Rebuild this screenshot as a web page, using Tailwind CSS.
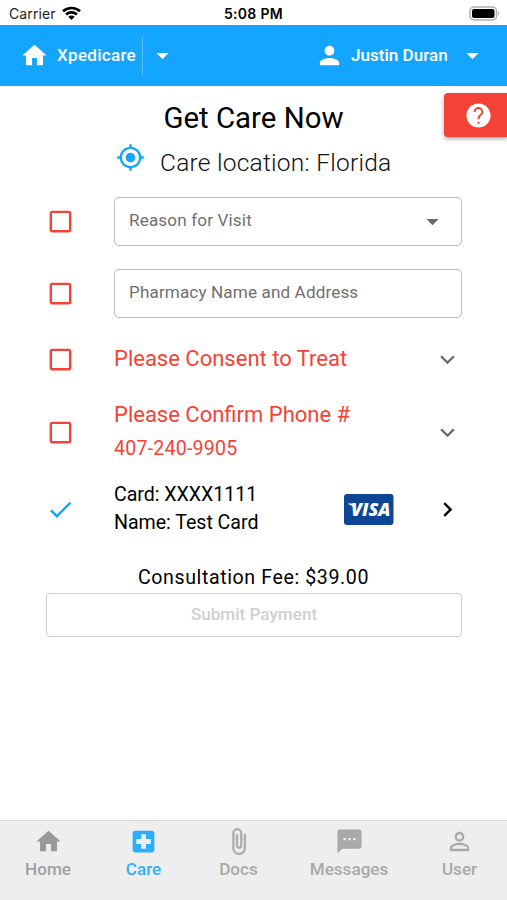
<!DOCTYPE html>
<html lang="en">
<head>
<meta charset="utf-8">
<title>Xpedicare</title>
<script src="https://cdn.jsdelivr.net/npm/@tailwindcss/browser@4"></script>
</head>
<body class="bg-white">
<svg class="hidden">
  <symbol id="home" viewBox="0 0 24 24"><path d="M10 20v-6h4v6h5v-8h3L12 3 2 12h3v8z"/></symbol>
  <symbol id="down" viewBox="0 0 24 24"><path d="M7 10l5 5 5-5z"/></symbol>
  <symbol id="person" viewBox="0 0 24 24"><path d="M12 12c2.21 0 4-1.79 4-4s-1.79-4-4-4-4 1.790-4 4 1.790 4 4 4zm0 2c-2.670 0-8 1.340-8 4v2h16v-2c0-2.660-5.330-4-8-4z"/></symbol>
  <symbol id="box" viewBox="0 0 24 24"><path d="M19 5v14H5V5h14m0-2H5c-1.100 0-2 .9-2 2v14c0 1.100.9 2 2 2h14c1.100 0 2-.9 2-2V5c0-1.100-.9-2-2-2z"/></symbol>
  <symbol id="chevron" viewBox="0 0 24 24"><path d="M7.410 8.590 12 13.170l4.590-4.580L18 10l-6 6-6-6z"/></symbol>
</svg>
<div class="w-[507px] h-[900px] flex flex-col overflow-hidden bg-white font-['Roboto',sans-serif] text-black">
  <div class="h-[25px] shrink-0 grid grid-cols-3 items-center px-[9px] pt-[3px] font-['Inter',sans-serif] text-[14px] leading-none">
    <div class="flex items-center gap-[6px] text-[#222]">
      <span class="tracking-[0.1px]">Carrier</span>
      <svg class="w-[19px] h-[14px] -mt-[2px]" viewBox="0 0 19 14" fill="none" stroke="#000" stroke-width="2.7"><path d="M1 5.200C5.800.9 13.200.9 18 5.200"/><path d="M4.100 8.400c3.100-2.700 7.700-2.700 10.800 0"/><path d="M9.500 14 6.300 10.800c1.800-1.700 4.600-1.700 6.400 0z" fill="#000" stroke="none"/></svg>
    </div>
    <span class="text-center font-semibold tracking-[0.300px] whitespace-nowrap">5:08 PM</span>
    <svg class="w-[31px] h-[15px] justify-self-end relative -top-[1px] left-[2px]" viewBox="0 0 31 15"><rect x="1" y="1" width="26.500" height="13" rx="4" fill="#fff" stroke="#b0b0b0" stroke-width="1.500"/><rect x="3" y="3" width="22.500" height="9" rx="2" fill="#000"/><path d="M29 5v5q2-2.500 0-5z" fill="#aaa"/></svg>
  </div>
  <header class="h-[61px] shrink-0 bg-[#13a5ff] text-white flex items-center text-[17.100px] font-medium">
    <svg class="w-[29px] h-[29px] ml-[20px] fill-white"><use href="#home"/></svg>
    <span class="ml-[8px] w-[85px] tracking-[0.250px] whitespace-nowrap">Xpedicare</span>
    <span class="w-px h-[39px] bg-[#5cc0ff]"></span>
    <svg class="w-[29px] h-[29px] ml-[5px] fill-white"><use href="#down"/></svg>
    <svg class="w-[29px] h-[29px] ml-auto fill-white"><use href="#person"/></svg>
    <span class="ml-[7px] w-[107px] tracking-[0px] whitespace-nowrap">Justin Duran</span>
    <svg class="w-[29px] h-[29px] mr-[20px] fill-white"><use href="#down"/></svg>
  </header>
  <main class="flex-1 relative flex flex-col">
    <button class="absolute right-0 top-[7px] w-[63px] h-[44px] rounded-l-[4px] bg-[#f44336] shadow-[0_2px_4px_rgba(0,0,0,0.35)] flex items-center pl-[20px]">
      <svg class="w-[29px] h-[29px]" viewBox="0 0 24 24" fill="#fff"><path d="M12 2C6.480 2 2 6.480 2 12s4.480 10 10 10 10-4.480 10-10S17.520 2 12 2zm.8 16.800h-1.600v-1.700h1.600v1.700zm2.270-7.550-.9.920C13.350 13 12.800 13.600 12.800 15.200h-1.600v-.5c0-1.100.45-2.100 1.170-2.830l1.240-1.260c.47-.46.75-.96.75-1.610 0-1.300-1.060-2.360-2.360-2.360S9.640 7.700 9.640 9H8c0-2.210 1.790-4 4-4s4 1.790 4 4c0 .88-.36 1.680-.93 2.250z"/></svg>
    </button>
    <h1 class="mt-[14px] h-[36px] leading-[36px] text-center text-[29.400px] tracking-[0px]">Get Care Now</h1>
    <div class="h-[50px] flex pl-[116px]">
      <svg class="w-[29px] h-[29px] mt-[7px]" viewBox="0 0 24 24" fill="#13a5ff"><path d="M12 8c-2.210 0-4 1.790-4 4s1.790 4 4 4 4-1.790 4-4-1.790-4-4-4zm8.940 3A8.994 8.994 0 0 0 13 3.060V1h-2v2.060A8.994 8.994 0 0 0 3.060 11H1v2h2.060A8.994 8.994 0 0 0 11 20.940V23h2v-2.060A8.994 8.994 0 0 0 20.940 13H23v-2h-2.060zM12 19c-3.870 0-7-3.130-7-7s3.130-7 7-7 7 3.130 7 7-3.130 7-7 7z"/></svg>
      <p class="ml-[15px] mt-[10px] h-[34px] leading-[34px] text-[24.500px] font-light tracking-[0.250px] whitespace-nowrap text-[#111]">Care location: Florida</p>
    </div>
    <section class="mt-[11px] pl-[46px] pr-[45px]">
      <div class="h-[49px] flex items-center">
        <svg class="w-[29px] h-[29px] mr-[39px] fill-[#f44336]"><use href="#box"/></svg>
        <div class="flex-1 h-[49px] border border-[#bdbdbd] rounded-[5px] flex items-center justify-between pl-[14px] pr-[14px]">
          <span class="text-[17.100px] tracking-[0.150px] text-[#707070] pb-[2px]">Reason for Visit</span>
          <svg class="w-[29px] h-[29px] fill-[#6b6b6b]"><use href="#down"/></svg>
        </div>
      </div>
      <div class="mt-[23px] h-[49px] flex items-center">
        <svg class="w-[29px] h-[29px] mr-[39px] fill-[#f44336]"><use href="#box"/></svg>
        <div class="flex-1 h-[49px] border border-[#bdbdbd] rounded-[5px] flex items-center px-[14px]">
          <span class="text-[17.100px] tracking-[0.130px] text-[#707070] pb-[2px]">Pharmacy Name and Address</span>
        </div>
      </div>
      <div class="mt-[23px] h-[37px] flex items-center">
        <svg class="w-[29px] h-[29px] mr-[39px] fill-[#f44336]"><use href="#box"/></svg>
        <span class="flex-1 text-[22px] tracking-[0px] pb-[2px] text-[#f44336]">Please Consent to Treat</span>
        <svg class="w-[29px] h-[29px] fill-[#6b6b6b]"><use href="#chevron"/></svg>
      </div>
      <div class="mt-[18px] h-[73px] flex items-center">
        <svg class="w-[29px] h-[29px] mr-[39px] fill-[#f44336]"><use href="#box"/></svg>
        <div class="flex-1 pb-[2px] text-[#f44336]">
          <p class="h-[34px] leading-[34px] text-[22px] tracking-[0px]">Please Confirm Phone #</p>
          <p class="h-[34px] leading-[34px] text-[19.600px] tracking-[0.200px]">407-240-9905</p>
        </div>
        <svg class="w-[29px] h-[29px] fill-[#6b6b6b]"><use href="#chevron"/></svg>
      </div>
      <div class="mt-[10px] h-[61px] flex items-center">
        <svg class="w-[29px] h-[29px] mr-[39px]" viewBox="0 0 24 24" fill="#13a5ff"><path d="M9 16.170 4.830 12l-1.420 1.410L9 19 21 7l-1.410-1.410z"/></svg>
        <div class="flex-1 pb-[2px] text-[19.600px] leading-[28px] tracking-[-0.030px]">
          <p>Card: XXXX1111</p>
          <p>Name: Test Card</p>
        </div>
        <svg class="w-[50px] h-[31px] mr-[39px]" viewBox="0 0 50 31"><rect width="49.500" height="31" rx="3" fill="#0e4595"/><path d="M4 9.500h5.500l1.200 5.200Q8.200 11.200 4 9.900z" fill="#fff"/><text x="7" y="22" textLength="39.500" lengthAdjust="spacingAndGlyphs" font-family="Open Sans" font-size="17.500" font-weight="800" font-style="italic" fill="#fff">VISA</text></svg>
        <svg class="w-[29px] h-[29px] fill-black -rotate-90"><use href="#chevron"/></svg>
      </div>
    </section>
    <p class="mt-[23px] h-[30px] leading-[30px] text-center text-[19.600px] tracking-[0.600px]">Consultation Fee: $39.00</p>
    <button class="mt-0 ml-[46px] mr-[45px] h-[44px] border border-[#cfcfcf] rounded-[4px] text-[17.100px] font-medium tracking-[0px] text-[#cfcfcf]">Submit Payment</button>
  </main>
  <nav class="h-[80px] shrink-0 border-t border-[#d8d8d8] bg-[#eee] text-[#a9a9a9] fill-[#a9a9a9] text-[17.100px] font-medium tracking-[0px] flex text-center">
    <a class="w-[96px] flex flex-col items-center pt-[6px]"><svg class="w-[29px] h-[29px] fill-[#999]"><use href="#home"/></svg><span class="leading-[26px] text-[#9f9f9f]">Home</span></a>
    <a class="w-[95px] flex flex-col items-center pt-[6px] text-[#33aefb]"><svg class="w-[29px] h-[29px] fill-[#2baeff]" viewBox="0 0 24 24"><path d="M19 3H5c-1.100 0-1.990.9-1.990 2L3 19c0 1.100.9 2 2 2h14c1.100 0 2-.9 2-2V5c0-1.100-.9-2-2-2zm-1 11h-4v4h-4v-4H6v-4h4V6h4v4h4v4z"/></svg><span class="leading-[26px]">Care</span></a>
    <a class="w-[95px] flex flex-col items-center pt-[6px]"><svg class="w-[29px] h-[29px]" viewBox="0 0 24 24" stroke="#a9a9a9" stroke-width=".3"><path d="M16.500 6v11.500c0 2.210-1.790 4-4 4s-4-1.790-4-4V5c0-1.380 1.120-2.500 2.500-2.500s2.500 1.120 2.500 2.500v10.500c0 .55-.45 1-1 1s-1-.45-1-1V6H10v9.500c0 1.380 1.120 2.500 2.500 2.500s2.500-1.120 2.500-2.500V5c0-2.210-1.790-4-4-4S7 2.790 7 5v12.500c0 3.040 2.460 5.500 5.500 5.500s5.500-2.460 5.500-5.500V6h-1.500z"/></svg><span class="leading-[26px]">Docs</span></a>
    <a class="w-[126px] flex flex-col items-center pt-[6px]"><svg class="w-[29px] h-[29px]" viewBox="0 0 24 24"><path d="M20 2H4c-1.100 0-1.990.9-1.990 2L2 22l4-4h14c1.100 0 2-.9 2-2V4c0-1.100-.9-2-2-2zM9 11H7V9h2v2zm4 0h-2V9h2v2zm4 0h-2V9h2v2z"/></svg><span class="leading-[26px]">Messages</span></a>
    <a class="w-[95px] flex flex-col items-center pt-[6px]"><svg class="w-[29px] h-[29px]" viewBox="0 0 24 24"><path d="M12 5.900a2.100 2.100 0 1 1 0 4.200 2.100 2.100 0 0 1 0-4.200m0 9c2.970 0 6.100 1.460 6.100 2.100v1.100H5.900V17c0-.64 3.130-2.100 6.100-2.100M12 4C9.790 4 8 5.790 8 8s1.790 4 4 4 4-1.790 4-4-1.790-4-4-4zm0 9c-2.670 0-8 1.340-8 4v3h16v-3c0-2.660-5.330-4-8-4z"/></svg><span class="leading-[26px]">User</span></a>
  </nav>
</div>
</body>
</html>
